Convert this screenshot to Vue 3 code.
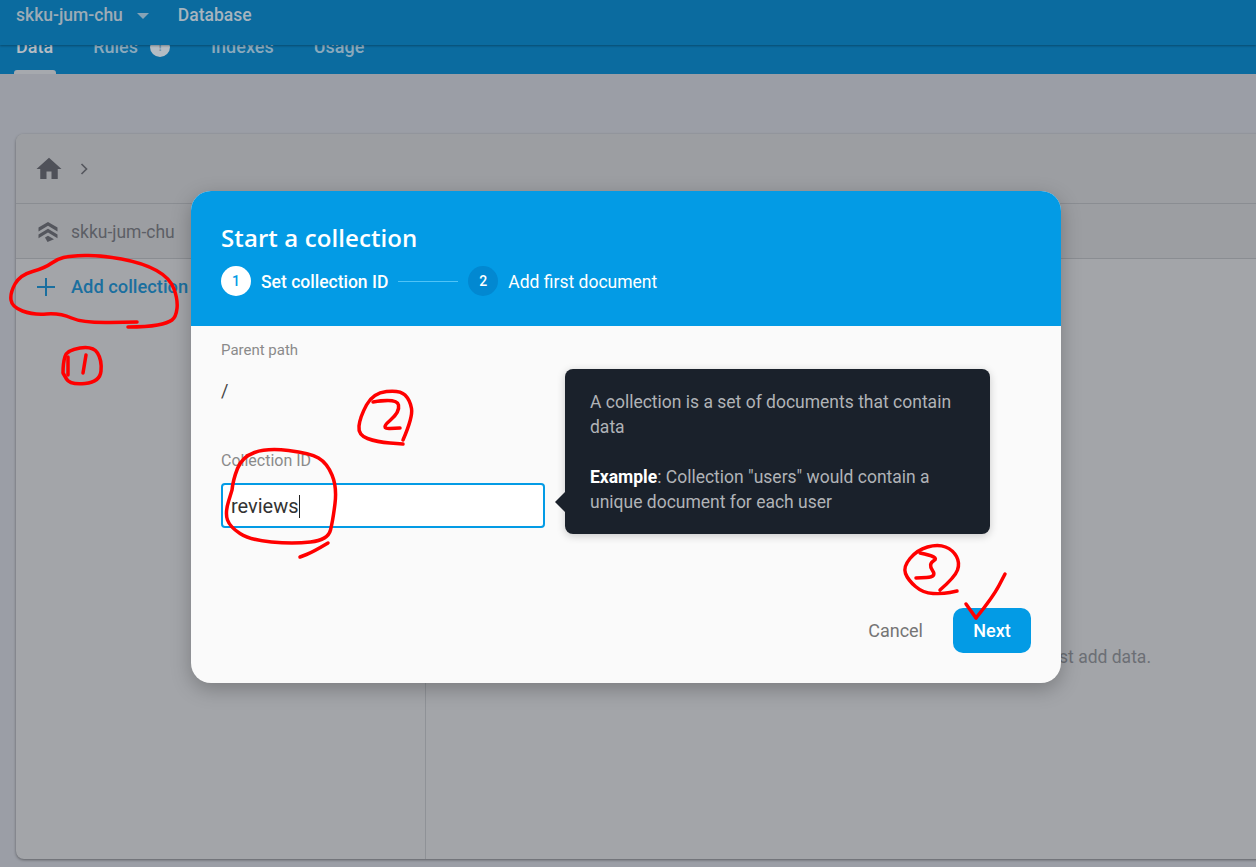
<template>
  <div class="page">
    <header class="top">
      <div class="toolbar">
        <span class="project">skku-jum-chu</span>
        <span class="caret"></span>
        <span class="crumb">Database</span>
      </div>
      <nav class="tabs">
        <span class="tab active">Data</span>
        <span class="tab rules">Rules <i class="alert">!</i></span>
        <span class="tab idx">Indexes</span>
        <span class="tab usage">Usage</span>
      </nav>
    </header>

    <section class="panel">
      <div class="path-bar">
        <svg class="home" viewBox="0 0 24 24" width="30" height="30"><path d="M10 20v-6h4v6h5v-8h3L12 3 2 12h3v8z" /></svg>
        <svg class="chev" viewBox="0 0 24 24" width="20" height="20"><path d="M9 6l6 6-6 6" /></svg>
      </div>
      <div class="cols">
        <aside class="side">
          <div class="root-row">
            <svg class="stack" viewBox="0 0 24 24" width="24" height="24">
              <path d="M12 2l9.5 5.6v3.8L12 5.8 2.500 11.400V7.600z" />
              <path d="M12 8.800l9.500 5.600v3.800L12 12.600l-9.500 5.600v-3.800z" />
              <path d="M12 15.800l6 3.500-6.500 2.700-2.500-4.400z" />
            </svg>
            <span>skku-jum-chu</span>
          </div>
          <div class="add-row">
            <svg viewBox="0 0 24 24" width="24" height="24"><path d="M12 3v18M3 12h18" /></svg>
            <span>Add collection</span>
          </div>
        </aside>
        <div class="main">
          <div class="main-head"></div>
          <p class="hint">Your database is ready to go. Just add data.</p>
        </div>
      </div>
    </section>

    <div class="dialog">
      <div class="dlg-head">
        <h2>Start a collection</h2>
        <div class="steps">
          <span class="num on">1</span>
          <span class="step-name strong">Set collection ID</span>
          <span class="line"></span>
          <span class="num off">2</span>
          <span class="step-name">Add first document</span>
        </div>
      </div>
      <div class="dlg-body">
        <label class="lbl">Parent path</label>
        <div class="slash">/</div>
        <label class="lbl id-lbl">Collection ID</label>
        <div class="input">reviews<span class="cursor"></span></div>
        <div class="tip">
          <p>A collection is a set of documents that contain data</p>
          <p><b>Example</b>: Collection "users" would contain a unique document for each user</p>
        </div>
        <div class="actions">
          <button class="cancel">Cancel</button>
          <button class="next">Next</button>
        </div>
      </div>
    </div>

    <!-- red pen marks drawn on top of the screenshot -->
    <svg class="ink" viewBox="0 0 1256 867" width="1256" height="867">
      <path v-for="(d, i) in marks" :key="i" :d="d" />
    </svg>
  </div>
</template>

<script setup>
// Pen strokes as point lists, smoothed into quadratic curves below
const strokes = [
  // 1: loop round add collection
  [[128, 327], [147, 327], [168, 323], [176, 317], [178, 300], [170, 278], [143, 263], [100, 255], [70, 256], [57, 259], [45, 268], [20, 275], [10, 293], [12, 307], [33, 315], [60, 313], [83, 323], [137, 322]],
  [[63, 373], [63, 363], [67, 350], [93, 346], [102, 360], [100, 382], [70, 385], [63, 373]],
  [[68, 357], [68, 375]],
  [[86, 355], [83, 373]],
  // 2
  [[403, 440], [413, 417], [410, 400], [400, 390], [373, 393], [360, 417], [358, 435], [377, 442], [403, 444]],
  [[373, 402], [397, 398], [400, 412], [380, 429], [400, 428]],
  // 2: loop round the input
  [[232, 490], [233, 480], [242, 457], [267, 448], [310, 453], [327, 463], [337, 487], [333, 520], [328, 540], [293, 544], [250, 540], [230, 527], [225, 513], [232, 490]],
  [[328, 543], [313, 552], [300, 557]],
  // 3
  [[940, 590], [955, 577], [960, 563], [953, 550], [938, 544], [917, 550], [903, 567], [908, 580], [923, 593], [943, 594], [957, 591]],
  [[920, 553], [940, 557], [928, 564], [937, 577], [916, 578]],
  // tick
  [[966, 604], [976, 618]],
  [[976, 618], [993, 597], [1005, 574]]
]

const marks = strokes.map((pts) => {
  let d = `M${pts[0][0]} ${pts[0][1]}`
  for (let i = 1; i < pts.length - 1; i++) {
    const mx = (pts[i][0] + pts[i + 1][0]) / 2
    const my = (pts[i][1] + pts[i + 1][1]) / 2
    d += `Q${pts[i][0]} ${pts[i][1]} ${mx} ${my}`
  }
  const last = pts[pts.length - 1]
  return d + `L${last[0]} ${last[1]}`
})
</script>

<style>
html, body { margin: 0; overflow: hidden; }
</style>

<style scoped>
.page {
  position: relative;
  width: 1256px;
  height: 867px;
  overflow: hidden;
  background: #9b9ea6;
  font-family: Roboto, "Liberation Sans", sans-serif;
}

.top {
  height: 74px;
  background: #0b6b9f;
}
.toolbar {
  position: relative;
  z-index: 1;
  height: 45px;
  display: flex;
  align-items: flex-start;
  padding: 5px 0 0 16px;
  box-sizing: border-box;
  background: #0b6b9f;
  box-shadow: 0 1px 2px rgba(0, 0, 0, 0.3);
  font-size: 17.5px;
  font-weight: 500;
  line-height: 21px;
  color: #9dabb6;
}
.caret {
  margin: 8px 0 0 14px;
  border-left: 6px solid transparent;
  border-right: 6px solid transparent;
  border-top: 6px solid #86a3b6;
}
.crumb { margin-left: 29px; color: #a6b4be; }

.tabs {
  display: flex;
  height: 29px;
  font-size: 18px;
  font-weight: 500;
  color: #8aa9bc;
}
.tab {
  position: relative;
  display: flex;
  align-items: center;
  height: 21px;
  margin-top: -9px;
  line-height: 21px;
}
.tab.active { margin-left: 16px; color: #b4bcc3; }
.tab.active::after {
  content: "";
  position: absolute;
  left: -2px;
  right: -3px;
  top: 34px;
  height: 4px;
  border-radius: 3px 3px 0 0;
  background: #a6a9ae;
}
.rules { margin-left: 40px; }
.alert {
  flex: none;
  width: 20px;
  height: 20px;
  margin-left: 12px;
  border-radius: 50%;
  background: #b4bcc3;
  color: #6d8ea4;
  font-style: normal;
  font-size: 12px;
  line-height: 20px;
  text-align: center;
}
.idx { margin-left: 41px; }
.usage { margin-left: 40px; }

.panel {
  position: absolute;
  left: 16px;
  top: 134px;
  width: 1260px;
  height: 725px;
  box-sizing: border-box;
  display: flex;
  flex-direction: column;
  background: #a3a5a9;
  border-radius: 8px;
  box-shadow: 0 1px 3px rgba(0, 0, 0, 0.4);
}
.path-bar {
  height: 69px;
  flex: none;
  display: flex;
  align-items: center;
  gap: 10px;
  padding-left: 18px;
  background: #9c9ea2;
  border-radius: 8px 8px 0 0;
  border-bottom: 1px solid #8a8d92;
}
.home { fill: #4f5159; }
.chev { fill: none; stroke: #55575e; stroke-width: 2; }
.cols { flex: 1; display: flex; }
.side { width: 409px; border-right: 1px solid #8f9297; }
.root-row {
  height: 55px;
  box-sizing: border-box;
  display: flex;
  align-items: center;
  gap: 11px;
  padding: 2px 0 0 20px;
  background: #9c9ea2;
  border-bottom: 1px solid #8a8d92;
  font-size: 17.5px;
  color: #5c5f66;
}
.stack { fill: #54565d; }
.add-row {
  height: 55px;
  display: flex;
  align-items: center;
  gap: 13px;
  padding-left: 18px;
  font-size: 18.3px;
  font-weight: 500;
  color: #1a6f9f;
}
.add-row svg { fill: none; stroke: #1a6f9f; stroke-width: 2; }
.main { flex: 1; position: relative; }
.main-head {
  height: 54px;
  background: #9c9ea2;
  border-bottom: 1px solid #8a8d92;
}
.hint {
  position: absolute;
  right: 125px;
  top: 443px;
  margin: 0;
  font-size: 17.5px;
  line-height: 21px;
  color: #6c6f75;
}

.dialog {
  position: absolute;
  left: 191px;
  top: 191px;
  width: 870px;
  height: 492px;
  display: flex;
  flex-direction: column;
  border-radius: 20px;
  background: #fafafa;
  box-shadow: 0 6px 20px rgba(0, 0, 0, 0.25);
}
.dlg-head {
  height: 135px;
  box-sizing: border-box;
  flex: none;
  padding: 32px 30px 0;
  background: #039be5;
  border-radius: 20px 20px 0 0;
  color: #fff;
}
.dlg-head h2 {
  margin: 0;
  font-family: "Open Sans", Roboto, sans-serif;
  font-size: 24px;
  font-weight: 600;
  letter-spacing: 0.1px;
  line-height: 30px;
}
.steps {
  display: flex;
  align-items: center;
  margin-top: 13px;
  font-size: 17.5px;
}
.num {
  width: 30px;
  height: 30px;
  border-radius: 50%;
  font-size: 14px;
  font-weight: 500;
  line-height: 30px;
  text-align: center;
}
.num.on { background: #fff; color: #039be5; }
.num.off { background: #0288d1; color: #fff; }
.step-name { margin-left: 10px; padding-top: 2px; font-weight: 400; }
.step-name.strong { font-weight: 500; }
.line {
  width: 60px;
  height: 1px;
  margin: 0 10px;
  background: #4fc3f7;
}
.dlg-body {
  position: relative;
  flex: 1;
  padding: 16px 30px 0;
}
.lbl {
  display: block;
  font-size: 15px;
  line-height: 17px;
  color: #8a8a8a;
}
.slash {
  margin-top: 21px;
  font-size: 18px;
  line-height: 22px;
  color: #444;
}
.id-lbl { margin-top: 50px; font-size: 16px; }
.input {
  width: 324px;
  height: 45px;
  box-sizing: border-box;
  margin-top: 14px;
  padding-left: 8px;
  border: 2px solid #039be5;
  border-radius: 4px;
  background: #fff;
  font-size: 20px;
  line-height: 43px;
  color: #333;
}
.cursor {
  display: inline-block;
  width: 1px;
  height: 23px;
  background: #222;
  vertical-align: -5px;
}
.tip {
  position: absolute;
  left: 374px;
  top: 43px;
  width: 425px;
  height: 165px;
  box-sizing: border-box;
  padding: 21px 25px;
  background: #1a212b;
  border-radius: 8px;
  box-shadow: 0 2px 8px rgba(0, 0, 0, 0.2);
  font-size: 17.5px;
  line-height: 25px;
  color: #b0b3b7;
}
.tip::before {
  content: "";
  position: absolute;
  left: -10px;
  top: 123px;
  border-top: 10px solid transparent;
  border-bottom: 10px solid transparent;
  border-right: 10px solid #1a212b;
}
.tip p { margin: 0 0 25px; }
.tip p:last-child { margin: 0; }
.tip b { color: #fff; font-weight: 700; }
.actions {
  position: absolute;
  right: 30px;
  bottom: 30px;
  display: flex;
  align-items: center;
  gap: 30px;
}
.actions button {
  border: 0;
  font-family: inherit;
  font-size: 18px;
}
.cancel {
  padding: 0;
  background: none;
  color: #757575;
}
.next {
  width: 78px;
  height: 45px;
  border-radius: 10px;
  background: #039be5;
  color: #fff;
  font-weight: 500;
}

.ink {
  position: absolute;
  left: 0;
  top: 0;
  z-index: 2;
  pointer-events: none;
  fill: none;
  stroke: #f00;
  stroke-width: 3.5;
  stroke-linecap: round;
  stroke-linejoin: round;
}
</style>
